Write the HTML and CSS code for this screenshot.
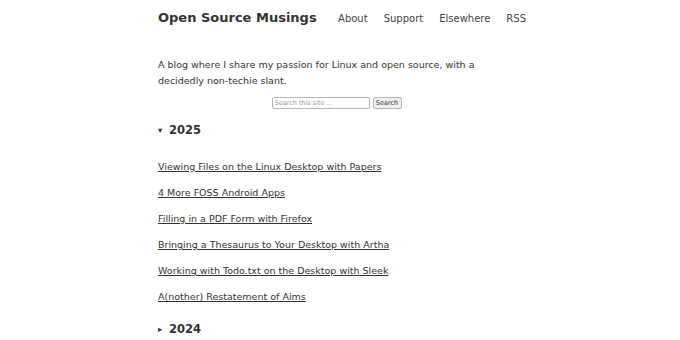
FILE: index.html
```html
<!DOCTYPE html>
<html lang="en">
<head>
  <meta charset="UTF-8">
  <meta name="viewport" content="width=device-width, initial-scale=1.0">
  <title>Open Source Musings</title>
  <link rel="stylesheet" href="styles.css">
</head>
<body>
<div class="container">
  <header class="site-header">
    <a class="site-title" href="#">Open Source Musings</a>
    <nav class="site-nav">
      <a href="#">About</a>
      <a href="#">Support</a>
      <a href="#">Elsewhere</a>
      <a href="#">RSS</a>
    </nav>
  </header>

  <p class="intro">A blog where I share my passion for Linux and open source, with a decidedly non-techie slant.</p>

  <form class="search">
    <input type="text" placeholder="Search this site ...">
    <button type="button">Search</button>
  </form>

  <details class="year" open>
    <summary>2025</summary>
    <ul class="posts">
      <li><a href="#">Viewing Files on the Linux Desktop with Papers</a></li>
      <li><a href="#">4 More FOSS Android Apps</a></li>
      <li><a href="#">Filling in a PDF Form with Firefox</a></li>
      <li><a href="#">Bringing a Thesaurus to Your Desktop with Artha</a></li>
      <li><a href="#">Working with Todo.txt on the Desktop with Sleek</a></li>
      <li><a href="#">A(nother) Restatement of Aims</a></li>
    </ul>
  </details>

  <details class="year">
    <summary>2024</summary>
    <ul class="posts">
      <li><a href="#">More posts</a></li>
    </ul>
  </details>
</div>
</body>
</html>
```

FILE: styles.css
```css
body {
  font-family: 'DejaVu Sans', sans-serif;
  font-size: 9.5px;
  color: #333;
  margin: 0;
  padding: 0;
  background: #fff;
}
.container {
  max-width: 364px;
  margin: 0 auto;
}
.site-header {
  display: flex;
  align-items: center;
  justify-content: space-between;
  padding-top: 10px;
  height: 16px;
}
.site-title {
  font-size: 13px;
  font-weight: bold;
  line-height: 16px;
  color: #333;
  text-decoration: none;
}
.site-nav {
  display: flex;
  gap: 16px;
  margin-right: -4px;
}
.site-nav a {
  font-size: 10px;
  color: #444;
  text-decoration: none;
}
.intro {
  line-height: 16px;
  margin: 31px 0 8px;
}
.search {
  display: flex;
  justify-content: center;
  gap: 3px;
  padding-right: 7px;
}
.search input {
  box-sizing: border-box;
  font-family: 'DejaVu Sans', sans-serif;
  font-size: 6.5px;
  width: 98px;
  height: 12px;
  padding: 0 2px;
  border: 1px solid #b5b5b5;
  border-radius: 2px;
}
.search input::placeholder {
  color: #999;
}
.search button {
  box-sizing: border-box;
  font-family: 'DejaVu Sans', sans-serif;
  font-size: 6.5px;
  width: 29px;
  height: 12px;
  padding: 0;
  border: 1px solid #b5b5b5;
  border-radius: 2px;
  background: #efefef;
  color: #333;
}
.year {
  margin-top: 13px;
}
.year + .year {
  margin-top: 16px;
}
.year summary {
  display: block;
  font-size: 11.5px;
  font-weight: bold;
  line-height: 16px;
  cursor: pointer;
  list-style: none;
}
.year summary::-webkit-details-marker {
  display: none;
}
.year summary::before {
  content: "▸";
  display: inline-block;
  width: 11px;
  font-size: 8.5px;
  vertical-align: 1px;
}
.year[open] summary::before {
  content: "▾";
}
.posts {
  display: flex;
  flex-direction: column;
  gap: 10px;
  list-style: none;
  padding: 0;
  margin: 21px 0 0;
}
.posts li {
  line-height: 16px;
}
.posts a {
  color: #333;
}
```
